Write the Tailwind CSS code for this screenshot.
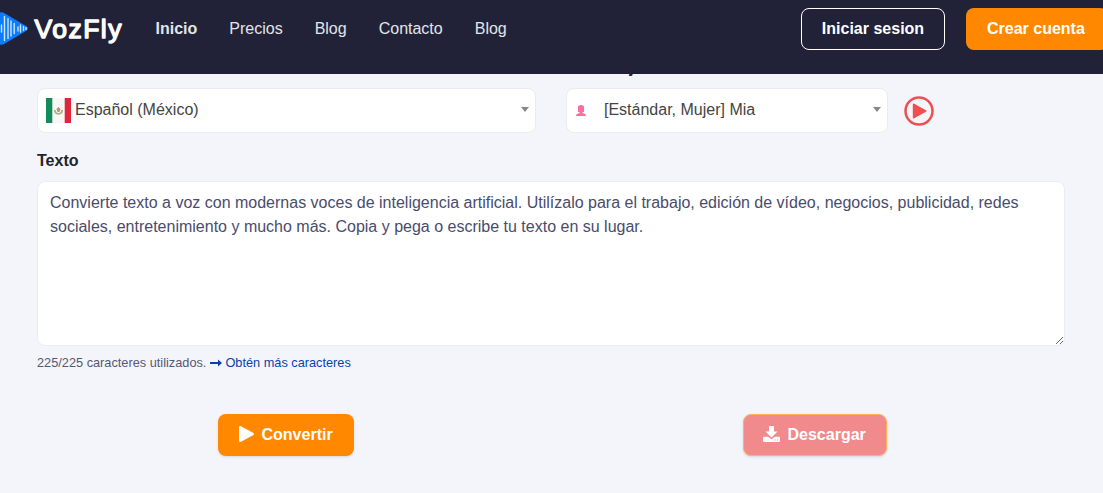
<!DOCTYPE html>
<html lang="es">
<head>
  <meta charset="UTF-8" />
  <meta name="viewport" content="width=device-width, initial-scale=1.0"/>
  <title>VozFly</title>
  <script src="https://cdn.jsdelivr.net/npm/@tailwindcss/browser@4"></script>
</head>
<body class="h-screen overflow-hidden bg-[#f4f5fb] font-['Liberation_Sans',Arial,sans-serif] text-base text-[#444]">

  <header class="relative z-10 flex h-[74px] w-[1108px] items-start bg-[#212238] pt-2">
    <a href="#" class="flex h-[42px] w-[155.5px] shrink-0 items-center">
      <svg width="124" height="42" viewBox="0 0 124 42">
        <path d="M0 4.500Q2 3.500 5 5.500L26 18Q30 20.500 26 23L5 35.500Q2 37.500 0 36.500Z" fill="#0a7cff"/>
        <path d="M1.500 17v7M4.500 8.500v24M8 10.500v20M11 13v15M14.200 15.500v10M18 19v4M20.500 17v7M23.500 18.500v4M26 19.500v2" stroke="#cfe6ff" stroke-width="1.400" stroke-linecap="round"/>
        <text x="34.500" y="29.500" textLength="87" lengthAdjust="spacing" fill="#fff" stroke="#fff" stroke-width="1.400" stroke-linejoin="round" font-family="Liberation Sans, Arial, sans-serif" font-size="26.500">VozFly</text>
      </svg>
    </a>
    <nav class="flex h-[42px] grow items-center gap-8 text-[#e4e4e8]">
      <a href="#" class="font-bold">Inicio</a>
      <a href="#">Precios</a>
      <a href="#">Blog</a>
      <a href="#">Contacto</a>
      <a href="#">Blog</a>
    </nav>
    <div class="flex gap-[21px] font-bold text-white">
      <a href="#" class="flex h-[42px] w-36 items-center justify-center rounded-lg border border-white">Iniciar sesion</a>
      <a href="#" class="flex h-[42px] w-[142px] items-center pl-[21px] rounded-lg bg-[#ff8800]">Crear cuenta</a>
    </div>
  </header>

  <main class="-mt-[18px] pl-[37px]">
    <div class="flex">
      <div class="w-[529px]">
        <label class="mb-2 block font-bold text-[#212529]">Idioma</label>
        <div class="flex h-[45px] w-[499px] items-center rounded-lg border border-[#e9ecf2] bg-white pr-1.5 pl-2">
          <svg class="shrink-0" width="25" height="25" viewBox="0 0 25 25">
            <path fill="#f8f7f5" d="M0 0h25v25H0z"/>
            <path fill="#128a5b" d="M0 0h6.300v25H0z"/>
            <path fill="#e1253d" d="M18.700 0H25v25h-6.300z"/>
            <path d="M8.800 12Q9 15.800 12.500 15.800Q16 15.800 16.200 12" fill="none" stroke="#a9b083" stroke-width="1.800"/>
            <path d="M12.500 9l2 2-1 3h-2l-1-3z" fill="#c58d65"/>
          </svg>
          <span class="-mt-0.5 ml-1 grow">Español (México)</span>
          <svg class="-mt-0.5" width="8" height="5" viewBox="0 0 8 5"><path d="M0 0h8L4 5z" fill="#888"/></svg>
        </div>
      </div>
      <div>
        <label class="mb-2 block font-bold text-[#212529]">Personaje</label>
        <div class="flex items-center gap-4">
          <div class="flex h-[45px] w-[322px] items-center rounded-lg border border-[#e9ecf2] bg-white pr-1.5 pl-[9px]">
            <svg class="shrink-0" width="10" height="11" viewBox="0 0 10 11">
              <path d="M2 2Q2 0 5 0Q8 0 8 2V7H6.500V8L9 9Q10 9.500 10 11H0Q0 9.500 1 9L3.500 8V7H2Z" fill="#ff6c9f"/>
            </svg>
            <span class="-mt-0.5 ml-[18px] grow">[Estándar, Mujer] Mia</span>
            <svg class="-mt-0.5" width="8" height="5" viewBox="0 0 8 5"><path d="M0 0h8L4 5z" fill="#888"/></svg>
          </div>
          <svg width="30" height="30" viewBox="0 0 30 30">
            <circle cx="15" cy="15" r="13.500" fill="none" stroke="#f04e50" stroke-width="2.500"/>
            <path d="M9.800 8.500L21.500 15L9.800 21.500Z" fill="#f04e50" stroke="#f04e50" stroke-width="2" stroke-linejoin="round"/>
          </svg>
        </div>
      </div>
    </div>

    <label for="texto" class="mt-4 block font-bold text-[#212529]">Texto</label>
    <textarea id="texto" spellcheck="false" class="mt-2 block h-[165px] w-[1028px] resize-y rounded-lg border border-[#e9ecf2] bg-white px-3 pt-[9px] pb-[7px] text-[#4a4c6b] outline-none">Convierte texto a voz con modernas voces de inteligencia artificial. Utilízalo para el trabajo, edición de vídeo, negocios, publicidad, redes sociales, entretenimiento y mucho más. Copia y pega o escribe tu texto en su lugar.</textarea>

    <div class="mt-[7px] flex h-5 items-center text-[12.75px] text-[#56586f]">
      <span>225/225 caracteres utilizados.</span>
      <a href="#" class="ml-1 flex items-center gap-[3px] text-[#0a3fae]">
        <svg width="12" height="8" viewBox="0 0 12 8"><path d="M0 3h8V.500L12 4 8 7.500V5H0z" fill="#0a3fae"/></svg>
        <span>Obtén más caracteres</span>
      </a>
    </div>

    <div class="mt-[41px] flex pl-[181px] font-bold text-white">
      <button class="mr-[389px] flex h-[42px] w-[136px] items-center rounded-lg bg-[#ff8800] pl-[21px] shadow-sm">
        <svg class="-mt-0.5" width="15" height="16" viewBox="0 0 15 16"><path d="M1 1L14 8L1 15Z" fill="#fff" stroke="#fff" stroke-width="2" stroke-linejoin="round"/></svg>
        <span class="ml-[7.5px]">Convertir</span>
      </button>
      <button class="flex h-[42px] w-36 items-center rounded-lg border border-[#ffb45a] bg-[#f18a8c] pl-[19px] shadow-sm">
        <svg class="-mt-0.5" width="17" height="16" viewBox="0 0 17 16">
          <path d="M6 0h5v5.500h3.500L8.500 11.500L2.500 5.500H6z" fill="#fff"/>
          <path d="M1 10.700h4l3.500 2.500L12 10.700h4q1 0 1 1V15q0 1-1 1H1q-1 0-1-1v-3.300q0-1 1-1z" fill="#fff"/>
          <path d="M11.500 14h1M14 14h1" stroke="#f18a8c"/>
        </svg>
        <span class="ml-[7.5px]">Descargar</span>
      </button>
    </div>
  </main>

</body>
</html>
